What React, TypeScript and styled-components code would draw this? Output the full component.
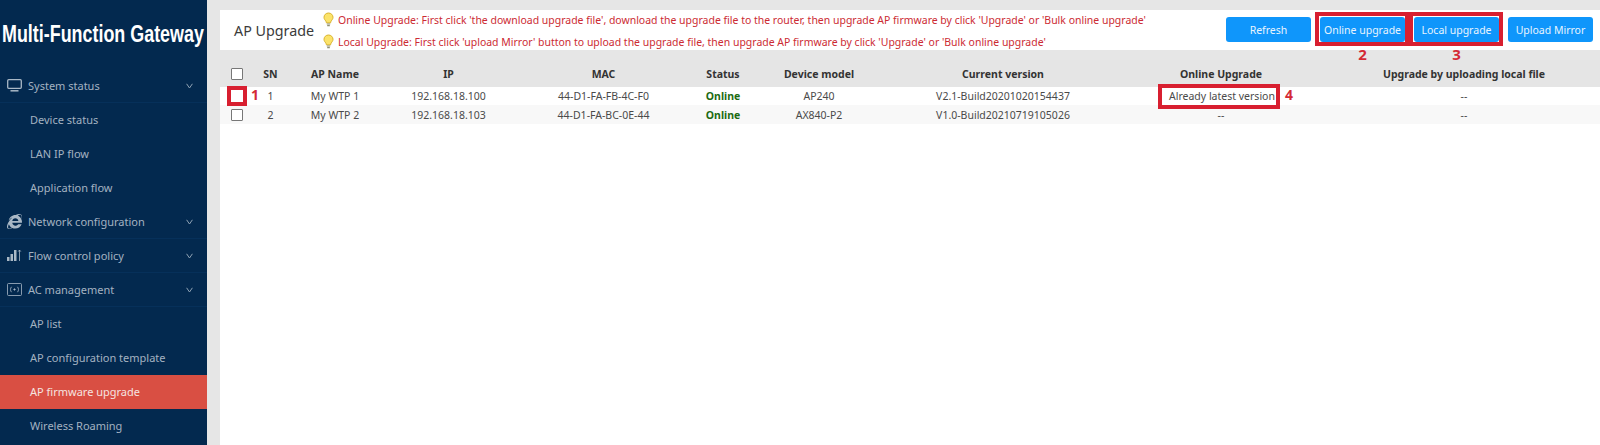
import React, { FC, ReactNode } from 'react';
import styled, { createGlobalStyle } from 'styled-components';
import { FaInternetExplorer } from 'react-icons/fa';

const GlobalStyle = createGlobalStyle`
  html, body {
    margin: 0;
    padding: 0;
    height: 100%;
    overflow: hidden;
    background: #e6e6e6;
  }

  #root {
    height: 100%;
  }
`;

const Page = styled.div`
  display: flex;
  font-family: 'Noto Sans', 'Open Sans', sans-serif;
  height: 445px;
  overflow: hidden;
  width: 1600px;
`;

const Sidebar = styled.aside`
  background: #03294f;
  flex: 0 0 207px;
  min-width: 0;
`;

const Brand = styled.h1`
  color: #fff;
  font-family: 'Liberation Sans', Arial, sans-serif;
  font-size: 24px;
  font-weight: 700;
  height: 69px;
  line-height: 67px;
  margin: 0;
  padding-left: 2px;
  transform: scaleX(0.746);
  transform-origin: 2px 0;
  white-space: nowrap;
  width: 272px;
`;

const NavRow = styled.div<{ $group?: boolean; $active?: boolean }>`
  align-items: center;
  background: ${({ $active }) => ($active ? '#d94f43' : 'transparent')};
  border-bottom: 1px solid ${({ $group }) => ($group ? '#06305a' : 'transparent')};
  box-sizing: border-box;
  color: ${({ $active }) => ($active ? '#f5e4e0' : '#a3b2c1')};
  display: flex;
  font-size: 11px;
  height: 34px;
  padding-left: ${({ $group }) => ($group ? '7px' : '30px')};
  padding-right: 14px;
`;

const NavIcon = styled.span`
  align-items: center;
  color: #a9b8c6;
  display: flex;
  flex: 0 0 21px;
  justify-content: flex-start;
  width: 21px;
`;

const NavLabel = styled.span`
  flex: 1;
`;

const Content = styled.main`
  display: flex;
  flex: 1;
  flex-direction: column;
  gap: 10px;
  min-width: 0;
  padding: 10px 0 0 13px;
`;

const TopBar = styled.div`
  align-items: center;
  background: #fff;
  display: flex;
  height: 40px;
  padding: 0 7px 0 14px;
`;

const PageTitle = styled.div`
  color: #3b3b3b;
  flex: 0 0 89px;
  font-size: 14.300px;
  white-space: nowrap;
`;

const Tips = styled.div`
  display: flex;
  flex: 1;
  flex-direction: column;
  gap: 5px;
  padding-top: 1px;
`;

const Tip = styled.div`
  align-items: center;
  color: #cc2b33;
  display: flex;
  font-size: 10.480px;
  gap: 4px;
  height: 17px;
  white-space: nowrap;
`;

const Actions = styled.div`
  display: flex;
  gap: 9px;
  margin-bottom: 1px;
`;

const ActionButton = styled.button`
  background: #0f96fb;
  border: 0;
  border-radius: 3px;
  color: #e8f4fe;
  font-family: inherit;
  font-size: 10.500px;
  height: 25px;
  padding: 0;
  position: relative;
  width: 85px;
`;

const Callout = styled.span`
  border: 4px solid #d81f30;
  bottom: -4px;
  left: -5px;
  position: absolute;
  right: -4px;
  top: -5px;
`;

const CalloutNumber = styled.span`
  color: #d42a35;
  font-size: 15px;
  font-weight: 700;
  left: 0;
  line-height: 14px;
  position: absolute;
  right: 0;
  text-align: center;
  top: 30px;
`;

const TableArea = styled.div`
  background: #fff;
  flex: 1;
  overflow: hidden;
`;

const rowHeights = { head: '27px', odd: '18px', even: '19px' };

const Row = styled.div<{ $kind: 'head' | 'odd' | 'even' }>`
  background: ${({ $kind }) =>
    $kind === 'head' ? '#e5e5e5' : $kind === 'even' ? '#f8f8f8' : '#fff'};
  color: ${({ $kind }) => ($kind === 'head' ? '#333' : '#4a4a4a')};
  display: grid;
  font-size: 10.500px;
  font-weight: ${({ $kind }) => ($kind === 'head' ? 700 : 400)};
  grid-template-columns: 33px 35px 94px 133px 177px 62px 130px 238px 198px 288px;
  height: ${({ $kind }) => rowHeights[$kind]};
  width: 1388px;
`;

const Cell = styled.div<{ $status?: boolean }>`
  align-items: center;
  box-sizing: border-box;
  color: ${({ $status }) => ($status ? '#1c6b12' : 'inherit')};
  display: flex;
  font-weight: ${({ $status }) => ($status ? 700 : 'inherit')};
  justify-content: center;
  position: relative;
  white-space: nowrap;
`;

const Box = styled.span<{ $marked?: boolean }>`
  background: #fff;
  border: 1px solid ${({ $marked }) => ($marked ? '#fff' : '#777')};
  border-radius: ${({ $marked }) => ($marked ? 0 : '1px')};
  box-sizing: border-box;
  display: block;
  height: 12px;
  outline: ${({ $marked }) => ($marked ? '4px solid #d81f30' : 'none')};
  width: 12px;
`;

const RowNumber = styled.span`
  color: #d42a35;
  font-size: 14px;
  font-weight: 700;
  left: 31px;
  line-height: 14px;
  position: absolute;
  top: 1px;
`;

const VersionNote = styled.span`
  background: #fff;
  border: 4px solid #d81f30;
  box-sizing: border-box;
  height: 25px;
  left: 36px;
  line-height: 16px;
  padding: 0 3px 0 7px;
  position: absolute;
  top: -3px;
  white-space: nowrap;
  width: 122px;
`;

const NoteNumber = styled.span`
  color: #d42a35;
  font-size: 14px;
  font-weight: 700;
  left: 163px;
  line-height: 14px;
  position: absolute;
  top: 1px;
`;

const Bulb: FC = () => (
  <svg width="11" height="15" viewBox="0 0 11 15">
    <path d="M5.500 1C2.900 1 1 3 1 5.300c0 1.700 1 2.600 1.800 3.700.4.600.5 1.100.6 1.800h4.200c.1-.7.200-1.200.6-1.800C8.900 7.900 10 7 10 5.300 10 3 8.100 1 5.500 1z" fill="#fbe36a" stroke="#d9b32c" strokeWidth="1" />
    <path d="M3.800 12h3.400M4.200 13.600h2.600" stroke="#8e8e70" strokeWidth="1.200" />
  </svg>
);

const Chevron: FC = () => (
  <svg width="7" height="6" viewBox="0 0 7 6">
    <path d="M.6.8 3.500 5 6.400.8" fill="none" stroke="#8fa2b4" strokeWidth="1" />
  </svg>
);

const MonitorIcon: FC = () => (
  <svg width="15" height="13" viewBox="0 0 15 13" fill="none" stroke="#a9b8c6">
    <rect x="0.700" y="0.700" width="13.600" height="8.600" rx="1" strokeWidth="1.300" />
    <path d="M3.500 11.800h8" strokeWidth="1.500" />
  </svg>
);

const FlowIcon: FC = () => (
  <svg width="15" height="13" viewBox="0 0 15 13" fill="#a9b8c6">
    <rect x="0" y="8" width="2.500" height="4" />
    <rect x="3.500" y="5" width="2.500" height="7" />
    <rect x="7" y="1" width="2.500" height="11" />
    <path d="M12.500 1v11M11.200 2.600 12.500 1l1.300 1.600" fill="none" stroke="#a9b8c6" strokeWidth="0.800" />
  </svg>
);

const AcIcon: FC = () => (
  <svg width="15" height="13" viewBox="0 0 15 13" fill="none" stroke="#a9b8c6" strokeWidth="0.800">
    <rect x="0.500" y="0.500" width="14" height="12" rx="1" />
    <path d="M4.500 3.800c-1.300 1.500-1.300 3.900 0 5.400M10.500 3.800c1.300 1.500 1.300 3.900 0 5.400" />
    <circle cx="7.500" cy="6.500" r="0.700" fill="#a9b8c6" />
  </svg>
);

const navItems: { label: string; icon?: ReactNode; active?: boolean }[] = [
  { label: 'System status', icon: <MonitorIcon /> },
  { label: 'Device status' },
  { label: 'LAN IP flow' },
  { label: 'Application flow' },
  { label: 'Network configuration', icon: <FaInternetExplorer size={15} /> },
  { label: 'Flow control policy', icon: <FlowIcon /> },
  { label: 'AC management', icon: <AcIcon /> },
  { label: 'AP list' },
  { label: 'AP configuration template' },
  { label: 'AP firmware upgrade', active: true },
  { label: 'Wireless Roaming' },
];

const headers = [
  'SN',
  'AP Name',
  'IP',
  'MAC',
  'Status',
  'Device model',
  'Current version',
  'Online Upgrade',
  'Upgrade by uploading local file',
];

const rows = [
  {
    sn: 1,
    name: 'My WTP 1',
    ip: '192.168.18.100',
    mac: '44-D1-FA-FB-4C-F0',
    model: 'AP240',
    version: 'V2.1-Build20201020154437',
  },
  {
    sn: 2,
    name: 'My WTP 2',
    ip: '192.168.18.103',
    mac: '44-D1-FA-BC-0E-44',
    model: 'AX840-P2',
    version: 'V1.0-Build20210719105026',
  },
];

const App: FC = () => (
  <Page>
    <GlobalStyle />

    <Sidebar>
      <Brand>Multi-Function Gateway</Brand>
      {navItems.map(({ label, icon, active }) => (
        <NavRow key={label} $group={Boolean(icon)} $active={active}>
          {icon && <NavIcon>{icon}</NavIcon>}
          <NavLabel>{label}</NavLabel>
          {icon && <Chevron />}
        </NavRow>
      ))}
    </Sidebar>

    <Content>
      <TopBar>
        <PageTitle>AP Upgrade</PageTitle>
        <Tips>
          <Tip>
            <Bulb />
            Online Upgrade: First click 'the download upgrade file', download the upgrade file to the router, then upgrade AP firmware by click 'Upgrade' or 'Bulk online upgrade'
          </Tip>
          <Tip>
            <Bulb />
            Local Upgrade: First click 'upload Mirror' button to upload the upgrade file, then upgrade AP firmware by click 'Upgrade' or 'Bulk online upgrade'
          </Tip>
        </Tips>
        <Actions>
          <ActionButton>Refresh</ActionButton>
          <ActionButton>
            Online upgrade
            <Callout />
            <CalloutNumber>2</CalloutNumber>
          </ActionButton>
          <ActionButton>
            Local upgrade
            <Callout />
            <CalloutNumber>3</CalloutNumber>
          </ActionButton>
          <ActionButton>Upload Mirror</ActionButton>
        </Actions>
      </TopBar>

      <TableArea>
        <Row $kind="head">
          <Cell>
            <Box />
          </Cell>
          {headers.map((header) => (
            <Cell key={header}>{header}</Cell>
          ))}
        </Row>

        {rows.map((row, index) => (
          <Row key={row.sn} $kind={index === 0 ? 'odd' : 'even'}>
            <Cell>
              <Box $marked={index === 0} />
              {index === 0 && <RowNumber>1</RowNumber>}
            </Cell>
            <Cell>{row.sn}</Cell>
            <Cell>{row.name}</Cell>
            <Cell>{row.ip}</Cell>
            <Cell>{row.mac}</Cell>
            <Cell $status>Online</Cell>
            <Cell>{row.model}</Cell>
            <Cell>{row.version}</Cell>
            <Cell>
              {index === 0 ? (
                <>
                  <VersionNote>Already latest version</VersionNote>
                  <NoteNumber>4</NoteNumber>
                </>
              ) : (
                '--'
              )}
            </Cell>
            <Cell>--</Cell>
          </Row>
        ))}
      </TableArea>
    </Content>
  </Page>
);

export default App;
